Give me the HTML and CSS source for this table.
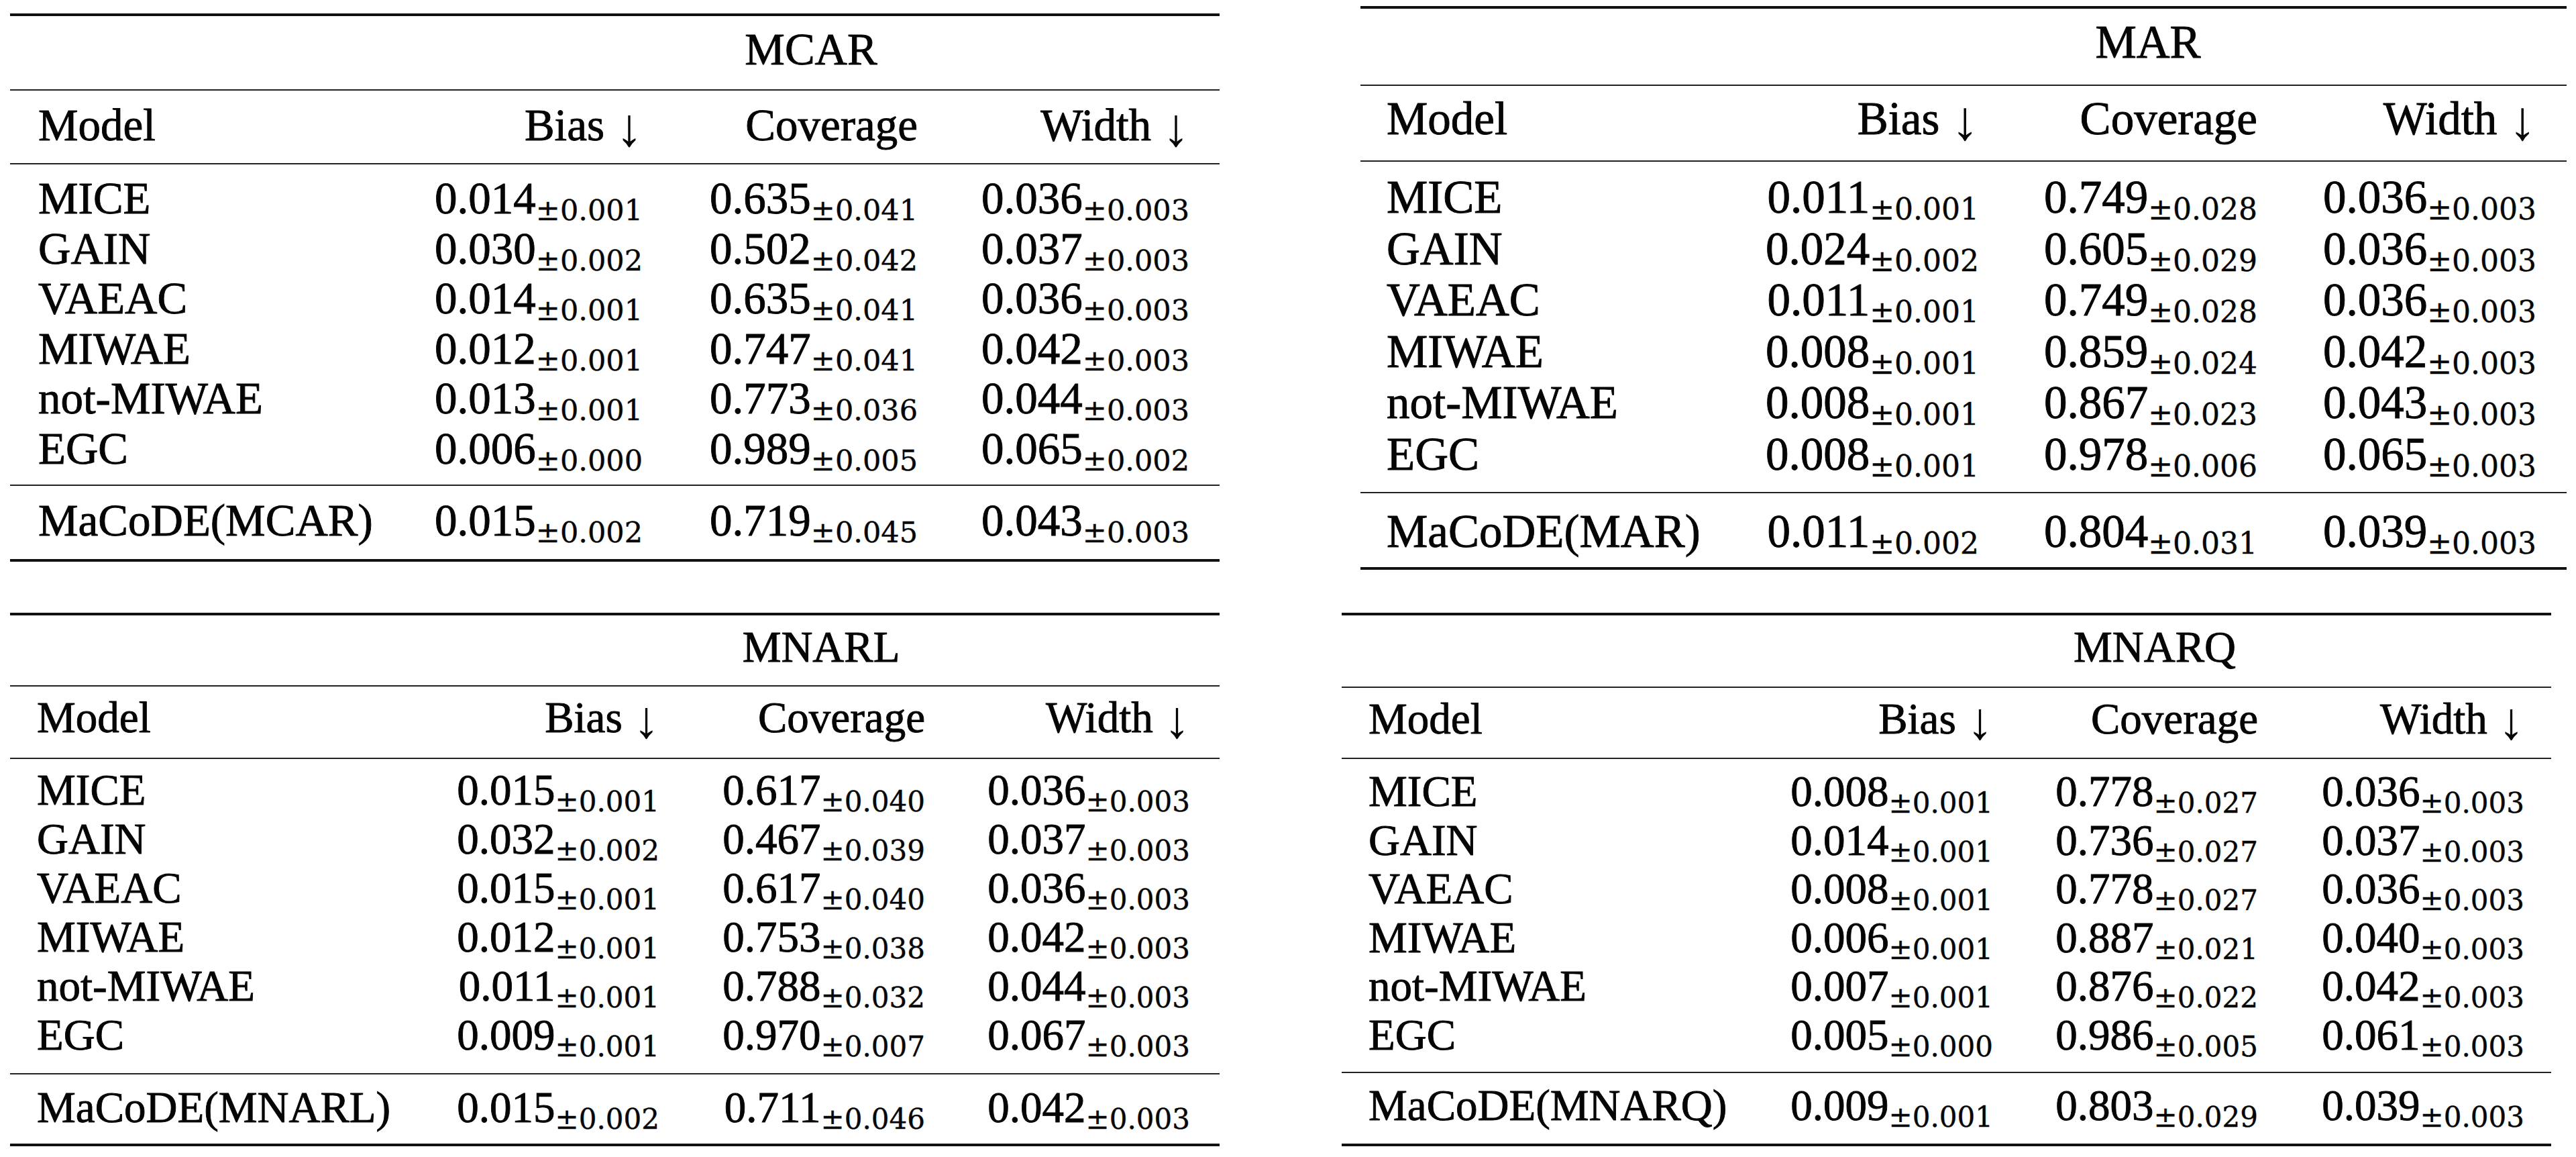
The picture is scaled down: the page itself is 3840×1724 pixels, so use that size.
FILE: index.html
```html
<!DOCTYPE html>
<html lang="en">
<head>
<meta charset="utf-8">
<title>Imputation results</title>
<link rel="stylesheet" href="styles.css">
</head>
<body>
<main class="page">

<table class="tbl t1">
<colgroup><col class="c1"><col class="c2"><col class="c3"><col class="c4"></colgroup>
<thead>
<tr class="r-title"><th></th><th class="ttl" colspan="3">MCAR</th></tr>
<tr class="r-head"><th class="lbl">Model</th><th>Bias <span class="arr">↓</span></th><th>Coverage</th><th>Width <span class="arr">↓</span></th></tr>
</thead>
<tbody class="base">
<tr><td class="lbl">MICE</td><td>0.014<span class="sd">±0.001</span></td><td>0.635<span class="sd">±0.041</span></td><td>0.036<span class="sd">±0.003</span></td></tr>
<tr><td class="lbl">GAIN</td><td>0.030<span class="sd">±0.002</span></td><td>0.502<span class="sd">±0.042</span></td><td>0.037<span class="sd">±0.003</span></td></tr>
<tr><td class="lbl">VAEAC</td><td>0.014<span class="sd">±0.001</span></td><td>0.635<span class="sd">±0.041</span></td><td>0.036<span class="sd">±0.003</span></td></tr>
<tr><td class="lbl">MIWAE</td><td>0.012<span class="sd">±0.001</span></td><td>0.747<span class="sd">±0.041</span></td><td>0.042<span class="sd">±0.003</span></td></tr>
<tr><td class="lbl">not-MIWAE</td><td>0.013<span class="sd">±0.001</span></td><td>0.773<span class="sd">±0.036</span></td><td>0.044<span class="sd">±0.003</span></td></tr>
<tr><td class="lbl">EGC</td><td>0.006<span class="sd">±0.000</span></td><td>0.989<span class="sd">±0.005</span></td><td>0.065<span class="sd">±0.002</span></td></tr>
</tbody>
<tbody class="ours">
<tr><td class="lbl">MaCoDE(MCAR)</td><td>0.015<span class="sd">±0.002</span></td><td>0.719<span class="sd">±0.045</span></td><td>0.043<span class="sd">±0.003</span></td></tr>
</tbody>
</table>

<table class="tbl t2">
<colgroup><col class="c1"><col class="c2"><col class="c3"><col class="c4"></colgroup>
<thead>
<tr class="r-title"><th></th><th class="ttl" colspan="3">MAR</th></tr>
<tr class="r-head"><th class="lbl">Model</th><th>Bias <span class="arr">↓</span></th><th>Coverage</th><th>Width <span class="arr">↓</span></th></tr>
</thead>
<tbody class="base">
<tr><td class="lbl">MICE</td><td>0.011<span class="sd">±0.001</span></td><td>0.749<span class="sd">±0.028</span></td><td>0.036<span class="sd">±0.003</span></td></tr>
<tr><td class="lbl">GAIN</td><td>0.024<span class="sd">±0.002</span></td><td>0.605<span class="sd">±0.029</span></td><td>0.036<span class="sd">±0.003</span></td></tr>
<tr><td class="lbl">VAEAC</td><td>0.011<span class="sd">±0.001</span></td><td>0.749<span class="sd">±0.028</span></td><td>0.036<span class="sd">±0.003</span></td></tr>
<tr><td class="lbl">MIWAE</td><td>0.008<span class="sd">±0.001</span></td><td>0.859<span class="sd">±0.024</span></td><td>0.042<span class="sd">±0.003</span></td></tr>
<tr><td class="lbl">not-MIWAE</td><td>0.008<span class="sd">±0.001</span></td><td>0.867<span class="sd">±0.023</span></td><td>0.043<span class="sd">±0.003</span></td></tr>
<tr><td class="lbl">EGC</td><td>0.008<span class="sd">±0.001</span></td><td>0.978<span class="sd">±0.006</span></td><td>0.065<span class="sd">±0.003</span></td></tr>
</tbody>
<tbody class="ours">
<tr><td class="lbl">MaCoDE(MAR)</td><td>0.011<span class="sd">±0.002</span></td><td>0.804<span class="sd">±0.031</span></td><td>0.039<span class="sd">±0.003</span></td></tr>
</tbody>
</table>

<table class="tbl t3">
<colgroup><col class="c1"><col class="c2"><col class="c3"><col class="c4"></colgroup>
<thead>
<tr class="r-title"><th></th><th class="ttl" colspan="3">MNARL</th></tr>
<tr class="r-head"><th class="lbl">Model</th><th>Bias <span class="arr">↓</span></th><th>Coverage</th><th>Width <span class="arr">↓</span></th></tr>
</thead>
<tbody class="base">
<tr><td class="lbl">MICE</td><td>0.015<span class="sd">±0.001</span></td><td>0.617<span class="sd">±0.040</span></td><td>0.036<span class="sd">±0.003</span></td></tr>
<tr><td class="lbl">GAIN</td><td>0.032<span class="sd">±0.002</span></td><td>0.467<span class="sd">±0.039</span></td><td>0.037<span class="sd">±0.003</span></td></tr>
<tr><td class="lbl">VAEAC</td><td>0.015<span class="sd">±0.001</span></td><td>0.617<span class="sd">±0.040</span></td><td>0.036<span class="sd">±0.003</span></td></tr>
<tr><td class="lbl">MIWAE</td><td>0.012<span class="sd">±0.001</span></td><td>0.753<span class="sd">±0.038</span></td><td>0.042<span class="sd">±0.003</span></td></tr>
<tr><td class="lbl">not-MIWAE</td><td>0.011<span class="sd">±0.001</span></td><td>0.788<span class="sd">±0.032</span></td><td>0.044<span class="sd">±0.003</span></td></tr>
<tr><td class="lbl">EGC</td><td>0.009<span class="sd">±0.001</span></td><td>0.970<span class="sd">±0.007</span></td><td>0.067<span class="sd">±0.003</span></td></tr>
</tbody>
<tbody class="ours">
<tr><td class="lbl">MaCoDE(MNARL)</td><td>0.015<span class="sd">±0.002</span></td><td>0.711<span class="sd">±0.046</span></td><td>0.042<span class="sd">±0.003</span></td></tr>
</tbody>
</table>

<table class="tbl t4">
<colgroup><col class="c1"><col class="c2"><col class="c3"><col class="c4"></colgroup>
<thead>
<tr class="r-title"><th></th><th class="ttl" colspan="3">MNARQ</th></tr>
<tr class="r-head"><th class="lbl">Model</th><th>Bias <span class="arr">↓</span></th><th>Coverage</th><th>Width <span class="arr">↓</span></th></tr>
</thead>
<tbody class="base">
<tr><td class="lbl">MICE</td><td>0.008<span class="sd">±0.001</span></td><td>0.778<span class="sd">±0.027</span></td><td>0.036<span class="sd">±0.003</span></td></tr>
<tr><td class="lbl">GAIN</td><td>0.014<span class="sd">±0.001</span></td><td>0.736<span class="sd">±0.027</span></td><td>0.037<span class="sd">±0.003</span></td></tr>
<tr><td class="lbl">VAEAC</td><td>0.008<span class="sd">±0.001</span></td><td>0.778<span class="sd">±0.027</span></td><td>0.036<span class="sd">±0.003</span></td></tr>
<tr><td class="lbl">MIWAE</td><td>0.006<span class="sd">±0.001</span></td><td>0.887<span class="sd">±0.021</span></td><td>0.040<span class="sd">±0.003</span></td></tr>
<tr><td class="lbl">not-MIWAE</td><td>0.007<span class="sd">±0.001</span></td><td>0.876<span class="sd">±0.022</span></td><td>0.042<span class="sd">±0.003</span></td></tr>
<tr><td class="lbl">EGC</td><td>0.005<span class="sd">±0.000</span></td><td>0.986<span class="sd">±0.005</span></td><td>0.061<span class="sd">±0.003</span></td></tr>
</tbody>
<tbody class="ours">
<tr><td class="lbl">MaCoDE(MNARQ)</td><td>0.009<span class="sd">±0.001</span></td><td>0.803<span class="sd">±0.029</span></td><td>0.039<span class="sd">±0.003</span></td></tr>
</tbody>
</table>

</main>
</body>
</html>
```
FILE: styles.css
```css
html, body {
  margin: 0;
  padding: 0;
  background: #ffffff;
}

.page {
  display: grid;
  grid-template-columns: 2000px 1fr;
  grid-template-rows: 913px auto;
  align-items: start;
}

.tbl {
  border-collapse: separate;
  border-spacing: 0;
  table-layout: fixed;
  width: var(--w);
  font-family: "Liberation Serif", "Times New Roman", serif;
  font-size: var(--fs);
  line-height: var(--lh);
  color: #050505;
  -webkit-text-stroke: 0.9px #050505;
}

.tbl th,
.tbl td {
  padding: 0 var(--pr) 0 0;
  text-align: right;
  font-weight: normal;
  white-space: nowrap;
  border-color: #111;
}

.tbl .lbl {
  text-align: left;
  padding-left: var(--pl);
  padding-right: 0;
}

.tbl .ttl {
  text-align: center;
  padding-right: 0;
}

.sd {
  font-family: "DejaVu Serif", "Liberation Serif", serif;
  font-size: var(--ss);
  line-height: 0;
  vertical-align: -10px;
  -webkit-text-stroke: 0.4px #050505;
}

.arr {
  font-family: "Liberation Serif", serif;
  font-size: 1.2em;
  line-height: 0;
  vertical-align: -0.1em;
  -webkit-text-stroke: 0;
}

/* rules (booktabs style) */
.r-title > th {
  border-top: 4px solid #111;
  border-bottom: 2px solid #222;
  padding-top: var(--t-pt);
  padding-bottom: var(--t-pb);
}

.r-head > th {
  border-bottom: 2px solid #222;
  padding-top: var(--h-pt);
  padding-bottom: var(--h-pb);
}

.base tr:first-child > td {
  padding-top: var(--d-pt);
}

.base tr:last-child > td {
  padding-bottom: var(--d-pb);
  border-bottom: 2px solid #222;
}

.ours td {
  padding-top: var(--o-pt);
  padding-bottom: var(--o-pb);
  border-bottom: 4px solid #111;
}

/* MCAR */
.t1 {
  --w: 1803px; --fs: 67px; --lh: 74.5px; --ss: 43px; --pl: 42px; --pr: 45px;
  --t-pt: 12px; --t-pb: 22px; --h-pt: 14px; --h-pb: 20px;
  --d-pt: 13px; --d-pb: 17px; --o-pt: 14px; --o-pb: 20px;
  margin: 20px 0 0 15px;
}
.t1 .c1 { width: 585px; }
.t1 .c2 { width: 403px; }
.t1 .c3 { width: 410px; }
.t1 .c4 { width: 405px; }

/* MAR */
.t2 {
  --w: 1798px; --fs: 69px; --lh: 76.5px; --ss: 44px; --pl: 39px; --pr: 45px;
  --t-pt: 12px; --t-pb: 24px; --h-pt: 11px; --h-pb: 24px;
  --d-pt: 15px; --d-pb: 18px; --o-pt: 19px; --o-pb: 14px;
  margin: 9px 0 0 28px;
}
.t2 .c1 { width: 550px; }
.t2 .c2 { width: 417px; }
.t2 .c3 { width: 415px; }
.t2 .c4 { width: 416px; }

/* MNARL */
.t3 {
  --w: 1803px; --fs: 65px; --lh: 73px; --ss: 42px; --pl: 40px; --pr: 44px;
  --t-pt: 11px; --t-pb: 20px; --h-pt: 10px; --h-pb: 23px;
  --d-pt: 10px; --d-pb: 20px; --o-pt: 13px; --o-pb: 17px;
  margin: 0 0 0 15px;
}
.t3 .c1 { width: 615px; }
.t3 .c2 { width: 397px; }
.t3 .c3 { width: 396px; }
.t3 .c4 { width: 395px; }

/* MNARQ */
.t4 {
  --w: 1803px; --fs: 65px; --lh: 72.5px; --ss: 42px; --pl: 40px; --pr: 40px;
  --t-pt: 11px; --t-pb: 22.5px; --h-pt: 10px; --h-pb: 21.5px;
  --d-pt: 12px; --d-pb: 19px; --o-pt: 12px; --o-pb: 20.5px;
  margin: 0;
}
.t4 .c1 { width: 621px; }
.t4 .c2 { width: 390px; }
.t4 .c3 { width: 395px; }
.t4 .c4 { width: 397px; }
```
